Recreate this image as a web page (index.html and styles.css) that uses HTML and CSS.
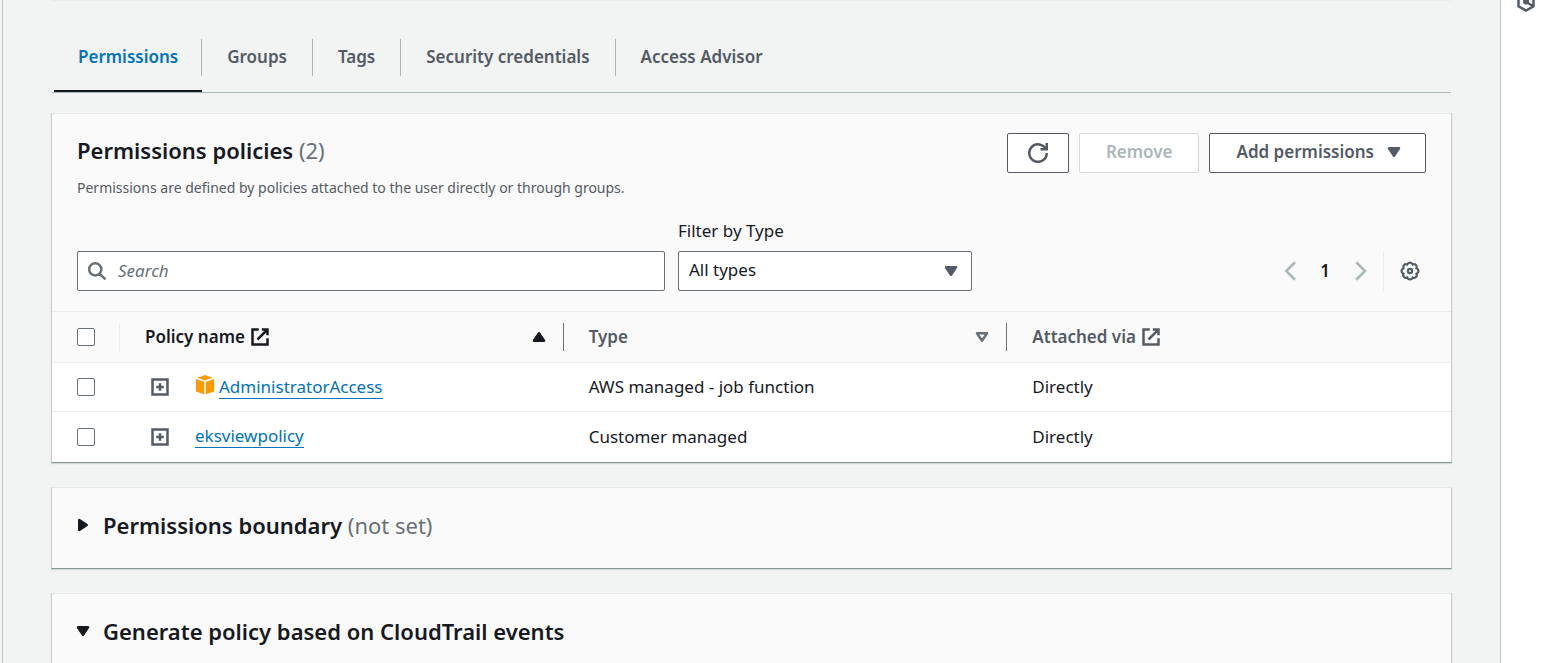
FILE: index.html
```html
<!DOCTYPE html>
<html lang="en">
<head>
<meta charset="utf-8">
<meta name="viewport" content="width=device-width, initial-scale=1">
<title>User permissions</title>
<link rel="stylesheet" href="styles.css">
</head>
<body>
<svg class="defs" aria-hidden="true">
  <symbol id="external" viewBox="0 0 16 16"><path d="M7 2H2v12h12V9M9.500 2H14v4.500M6 10l7.500-7.500" fill="none" stroke="currentColor" stroke-width="2"/></symbol>
  <symbol id="down" viewBox="0 0 16 16"><path d="M4 5h8l-4 6z" fill="currentColor" stroke="currentColor" stroke-width="2" stroke-linejoin="round"/></symbol>
  <symbol id="up" viewBox="0 0 16 16"><path d="M4 11h8L8 5z" fill="currentColor" stroke="currentColor" stroke-width="2" stroke-linejoin="round"/></symbol>
  <symbol id="right" viewBox="0 0 16 16"><path d="M5 4v8l6-4z" fill="currentColor" stroke="currentColor" stroke-width="2" stroke-linejoin="round"/></symbol>
  <symbol id="down-open" viewBox="0 0 16 16"><path d="M4 5h8l-4 6z" fill="none" stroke="currentColor" stroke-width="2" stroke-linejoin="round"/></symbol>
  <symbol id="expand" viewBox="0 0 16 16"><path d="M2 2h12v12H2zM8 5v6M5 8h6" fill="none" stroke="currentColor" stroke-width="2"/></symbol>
</svg>
<div class="shell">
  <main class="main">
    <nav class="tabs" aria-label="User details">
      <a class="tab tab-active" href="#permissions" aria-current="page"><span>Permissions</span></a>
      <a class="tab" href="#groups"><span>Groups</span></a>
      <a class="tab" href="#tags"><span>Tags</span></a>
      <a class="tab" href="#credentials"><span>Security credentials</span></a>
      <a class="tab" href="#advisor"><span>Access Advisor</span></a>
    </nav>

    <section class="card" id="permissions">
      <header class="card-head">
        <div>
          <h2 class="title">Permissions policies <span class="note">(2)</span></h2>
          <p class="description">Permissions are defined by policies attached to the user directly or through groups.</p>
        </div>
        <div class="actions">
          <button class="button button-icon" type="button" aria-label="Refresh">
            <svg class="icon" viewBox="0 0 16 16"><path d="M10 5h5V0M15 8a7 7 0 1 1-.7-3" fill="none" stroke="currentColor" stroke-width="2"/></svg>
          </button>
          <button class="button" type="button" disabled>Remove</button>
          <button class="button button-menu" type="button">Add permissions <svg class="icon"><use href="#down"/></svg></button>
        </div>
      </header>

      <div class="filters">
        <div class="control">
          <svg class="icon search-icon" viewBox="0 0 16 16"><path d="M11.500 6.700a4.900 4.900 0 1 1-9.800 0a4.900 4.900 0 0 1 9.800 0M10 10.200l4.800 4.500" fill="none" stroke="currentColor" stroke-width="2"/></svg>
          <input class="field search" type="search" placeholder="Search" aria-label="Search policies">
        </div>
        <div>
          <label class="label" for="type-filter">Filter by Type</label>
          <div class="control">
            <select class="field select" id="type-filter"><option>All types</option></select>
            <svg class="icon select-icon"><use href="#down"/></svg>
          </div>
        </div>
        <div class="paging">
          <button class="plain muted" type="button" aria-label="Previous page"><svg class="icon" viewBox="0 0 16 16"><path d="M12 1L5 8l7 7" fill="none" stroke="currentColor" stroke-width="2"/></svg></button>
          <button class="plain page" type="button" aria-current="page">1</button>
          <button class="plain muted" type="button" aria-label="Next page"><svg class="icon" viewBox="0 0 16 16"><path d="M5 1l7 7-7 7" fill="none" stroke="currentColor" stroke-width="2"/></svg></button>
          <div class="settings">
            <button class="plain" type="button" aria-label="Preferences"><svg class="icon" viewBox="0 0 16 16"><g fill="none" stroke="currentColor" stroke-width="1.700"><path d="M12.990 5.930A2.200 2.200 0 0 1 12.990 10.070A2.200 2.200 0 0 1 10.070 12.990A2.200 2.200 0 0 1 5.930 12.990A2.200 2.200 0 0 1 3.010 10.070A2.200 2.200 0 0 1 3.010 5.930A2.200 2.200 0 0 1 5.930 3.010A2.200 2.200 0 0 1 10.070 3.010A2.200 2.200 0 0 1 12.990 5.930z" transform="translate(-.4 -.4) scale(1.050)"/><circle cx="8" cy="8" r="1.700"/></g></svg></button>
          </div>
        </div>
      </div>

      <table class="table">
        <thead>
          <tr>
            <th class="select-col"><div class="cell"><input class="check" type="checkbox" aria-label="Select all policies"></div></th>
            <th class="sorted"><div class="cell"><span>Policy name</span><svg class="icon"><use href="#external"/></svg><button class="plain sort" type="button" aria-label="Sort by policy name"><svg class="icon"><use href="#up"/></svg></button></div></th>
            <th><div class="cell"><span>Type</span><button class="plain sort" type="button" aria-label="Sort by type"><svg class="icon"><use href="#down-open"/></svg></button></div></th>
            <th><div class="cell"><span>Attached via</span><svg class="icon"><use href="#external"/></svg></div></th>
          </tr>
        </thead>
        <tbody>
          <tr>
            <td><div class="cell"><input class="check" type="checkbox" aria-label="Select AdministratorAccess"></div></td>
            <td><div class="cell policy">
              <button class="plain" type="button" aria-label="Expand AdministratorAccess"><svg class="icon"><use href="#expand"/></svg></button>
              <span class="policy-name"><svg class="icon cube" viewBox="0 0 20 20"><path d="M10 0l7.500 2.700L10 5.400 2.500 2.700zM.900 4l8.300 2.700v12.600L.900 16.500zM19.100 4l-8.300 2.700v12.600l8.300-2.800z" fill="currentColor"/></svg><a class="link" href="#administrator">AdministratorAccess</a></span>
            </div></td>
            <td>AWS managed - job function</td>
            <td>Directly</td>
          </tr>
          <tr>
            <td><div class="cell"><input class="check" type="checkbox" aria-label="Select eksviewpolicy"></div></td>
            <td><div class="cell policy">
              <button class="plain" type="button" aria-label="Expand eksviewpolicy"><svg class="icon"><use href="#expand"/></svg></button>
              <a class="link" href="#eksview">eksviewpolicy</a>
            </div></td>
            <td>Customer managed</td>
            <td>Directly</td>
          </tr>
        </tbody>
      </table>
    </section>

    <section class="card">
      <h2 class="title"><button class="toggle" type="button" aria-expanded="false"><svg class="icon"><use href="#right"/></svg><span>Permissions boundary <span class="note">(not set)</span></span></button></h2>
    </section>

    <section class="card">
      <h2 class="title"><button class="toggle" type="button" aria-expanded="true"><svg class="icon"><use href="#down"/></svg><span>Generate policy based on CloudTrail events</span></button></h2>
    </section>
  </main>
  <aside class="rail">
    <button class="plain" type="button" aria-label="Open tools"><svg class="icon" viewBox="0 0 20 20"><path d="M10 1.500l7.500 4.200v8.600L10 18.500l-7.500-4.200V5.700zM10 10l7 4" fill="none" stroke="currentColor" stroke-width="2.500"/><circle cx="10" cy="9.500" r="3" fill="currentColor"/></svg></button>
  </aside>
</div>
</body>
</html>
```
FILE: styles.css
```css
* { box-sizing: border-box; }

body {
  margin: 0;
  background: #f2f3f3;
  color: #16191f;
  font: 17px/24px "Noto Sans", "Open Sans", sans-serif;
}

button, input, select { font: inherit; color: inherit; }
h2, p { margin: 0; }

.defs { display: none; }
.icon { display: block; flex: none; width: 20px; height: 20px; }

.shell {
  display: flex;
  height: 100vh;
  margin-left: 2px;
  overflow: hidden;
}

.main {
  flex: 1;
  min-width: 0;
  padding: 0 48px;
  border-left: 1px solid #bcc4c4;
  border-right: 1px solid #bcc4c4;
}

.rail {
  display: flex;
  flex: none;
  justify-content: center;
  align-items: flex-start;
  width: 50px;
  background: #fff;
  color: #545b64;
}
.rail .plain { margin-top: -8px; }

.tabs {
  display: flex;
  margin: 0 1px 20px;
  padding: 38px 0 0 2px;
  border-top: 1px solid #eaeded;
  border-bottom: 1px solid #aab7b8;
  font-weight: 600;
}
.tab {
  padding-bottom: 14px;
  border-bottom: 2px solid transparent;
  color: #545b64;
  text-decoration: none;
}
.tab span {
  display: block;
  padding: 6px 25px 7px;
  border-right: 1px solid #aab7b8;
}
.tab:first-child span { padding-left: 24px; padding-right: 23px; }
.tab:last-child span { border-right: 0; }
.tab-active { border-bottom-color: #16191f; color: #0073bb; }

.card {
  margin-bottom: 24px;
  background: #fafafa;
  border: 1px solid #c6cccd;
  border-top-color: #e6e9e9;
  border-bottom-color: #879596;
  box-shadow: 0 1px 1px #d5dbdb;
}
.card-head {
  display: flex;
  justify-content: space-between;
  padding: 19px 25px 20px;
}
.title { font-size: 22px; line-height: 34px; font-weight: 600; }
.note { color: #687078; font-weight: 400; }
.description {
  padding-top: 10px;
  color: #545b64;
  font-size: 14px;
  line-height: 22px;
}

.actions { display: flex; gap: 10px; }
.button {
  display: flex;
  align-items: center;
  gap: 10px;
  height: 40px;
  padding: 0 26px 2px;
  border: 1px solid #545b64;
  border-radius: 2px;
  background: #fff;
  color: #545b64;
  font-weight: 600;
}
.button-icon { padding: 0 20px; }
.button-menu { padding-right: 21px; }
.button:disabled { border-color: #d5dbdb; color: #aab7b8; }

.filters {
  display: grid;
  grid-template-columns: 4fr 2fr 3fr;
  align-items: end;
  gap: 13px;
  padding: 0 25px 20px;
}
.label { display: block; padding-bottom: 8px; }
.control { position: relative; }
.field {
  display: block;
  width: 100%;
  height: 40px;
  padding: 0 10px 2px;
  border: 1px solid #687078;
  border-radius: 2px;
  background: #fff;
  appearance: none;
}
.search { padding-left: 40px; }
.search::placeholder { color: #687078; font-style: italic; opacity: 1; }
.search-icon { position: absolute; top: 10px; left: 10px; color: #687078; }
.select-icon {
  position: absolute;
  top: 10px;
  right: 11px;
  color: #545b64;
  pointer-events: none;
}

.plain { padding: 0; border: 0; background: none; color: #545b64; }
.muted { color: #aab7b8; }
.paging {
  display: flex;
  justify-content: flex-end;
  align-items: center;
  gap: 20px;
}
.page { color: #16191f; font-weight: 600; }
.settings {
  display: flex;
  align-items: center;
  height: 40px;
  margin-left: -7px;
  padding: 0 6px 0 16px;
  border-left: 1px solid #eaeded;
}

.table {
  width: 100%;
  table-layout: fixed;
  border-collapse: collapse;
  background: #fff;
}
.table th {
  padding: 11px 0;
  border-top: 1px solid #eaeded;
  background: #fafafa;
  color: #545b64;
  font-weight: 600;
  text-align: left;
}
.table th .cell {
  height: 28px;
  padding: 0 14px 0 25px;
  border-right: 1px solid #687078;
}
.table th:last-child .cell { border-right: 0; }
.table .select-col { width: 68px; }
.table .select-col .cell { border-right-color: #eaeded; }
.table .sorted { color: #16191f; }
.table td { height: 49px; padding: 0 25px; border-top: 1px solid #eaeded; }
.table tbody tr:last-child td { height: 50px; }
.cell { display: flex; align-items: center; gap: 5px; }
.sort { margin-left: auto; color: #687078; }
.sorted .sort { color: #16191f; }
.table .policy { gap: 25px; padding-left: 5px; }
.policy-name { display: flex; align-items: flex-end; gap: 4px; }
.cube { margin-bottom: 4px; color: #ff9900; }
.check {
  width: 18px;
  height: 18px;
  margin: 0;
  border: 1px solid #687078;
  border-radius: 2px;
  background: #fff;
  appearance: none;
}
.link {
  border-bottom: 1px solid #0073bb;
  color: #0073bb;
  line-height: 22px;
  text-decoration: none;
}

.toggle {
  display: flex;
  align-items: center;
  gap: 10px;
  width: 100%;
  padding: 20px 22px 26px 21px;
  border: 0;
  background: none;
  text-align: left;
}
```
